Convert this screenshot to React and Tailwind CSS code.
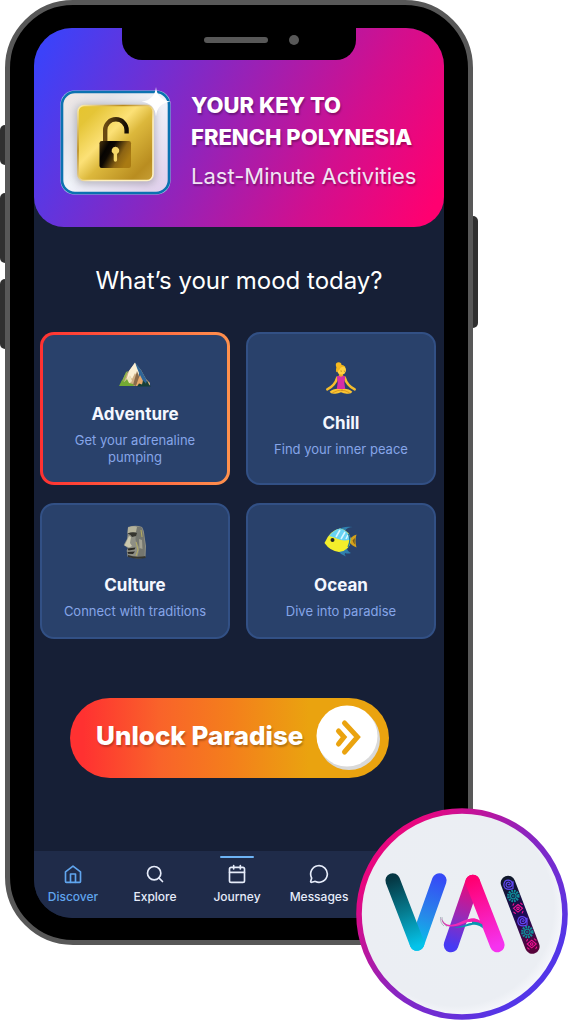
import React from "react";
import { Calendar, MessageCircle, Search } from "lucide-react";

function LockBadge() {
  return (
    <svg viewBox="0 0 111 105" className="mt-px h-[105px] w-[111px] shrink-0 overflow-visible" aria-hidden="true">
      <defs>
        <linearGradient id="silver" x1="0" y1="0" x2="1" y2="1">
          <stop offset="0" stopColor="#f1e8e4" />
          <stop offset="0.25" stopColor="#e3e4ea" />
          <stop offset="0.5" stopColor="#f1f4fa" />
          <stop offset="1" stopColor="#e0cdec" />
        </linearGradient>
        <linearGradient id="gold" x1="0" y1="0" x2="1" y2="1">
          <stop offset="0" stopColor="#e6c52f" />
          <stop offset="0.15" stopColor="#e5c537" />
          <stop offset="0.4" stopColor="#fce176" />
          <stop offset="0.55" stopColor="#dcb83c" />
          <stop offset="0.85" stopColor="#b98d20" />
          <stop offset="1" stopColor="#c79f36" />
        </linearGradient>
        <linearGradient id="goldEdge" x1="0" y1="0" x2="1" y2="1">
          <stop offset="0" stopColor="#fff1b0" />
          <stop offset="0.3" stopColor="#b98a1c" />
          <stop offset="0.6" stopColor="#fff0bd" />
          <stop offset="1" stopColor="#fff3c4" />
        </linearGradient>
        <linearGradient id="bronze" x1="0" y1="0" x2="1" y2="0.5">
          <stop offset="0" stopColor="#4a330b" />
          <stop offset="0.28" stopColor="#060402" />
          <stop offset="0.42" stopColor="#0d0803" />
          <stop offset="0.75" stopColor="#8d6413" />
          <stop offset="1" stopColor="#a97a12" />
        </linearGradient>
        <linearGradient id="shackle" x1="0" y1="0" x2="1" y2="0">
          <stop offset="0" stopColor="#6a4a12" />
          <stop offset="0.4" stopColor="#4a330e" />
          <stop offset="1" stopColor="#120b03" />
        </linearGradient>
        <filter id="soft" x="-20%" y="-20%" width="140%" height="140%">
          <feGaussianBlur stdDeviation="4" />
        </filter>
      </defs>
      <rect x="0.5" y="0.5" width="110" height="104" rx="14" fill="#b9cfe8" />
      <rect x="2" y="2" width="107" height="101" rx="13" fill="url(#silver)" stroke="#0b72b0" strokeWidth="2.6" />
      <rect x="16" y="15" width="79" height="79" rx="7" fill="#77747f" opacity="0.5" filter="url(#soft)" />
      <rect x="18" y="15.500" width="75" height="75" rx="6" fill="url(#gold)" stroke="url(#goldEdge)" strokeWidth="1.6" />
      <path d="M45.200 53V40a10.700 10.700 0 0 1 21.400 0v3.500" fill="none" stroke="url(#shackle)" strokeWidth="4.400" />
      <rect x="39.500" y="51" width="31.500" height="27" rx="2.200" fill="url(#bronze)" />
      <path d="M55.300 56.800a3.700 3.700 0 0 0-2 6.800l.4.400v6a1.700 1.700 0 0 0 3.400 0v-6l.4-.4a3.700 3.700 0 0 0-2.200-6.800z" fill="#f6d768" />
      <path d="M96-3q1.200 13 14.500 14.700Q97.200 13 96 26.500 94.800 13 81.500 11.700 94.800 10 96-3z" fill="#fff" />
    </svg>
  );
}

function MountainIcon() {
  return (
    <svg viewBox="0 -5 36 36" className="h-9 w-9" aria-hidden="true">
      <path d="M3 29 8 18l3-3 7-9 6 7 5 9 4 4v3z" fill="#cfae82" />
      <path d="M18 5.500 24 13l5 9 2 5-6-2-4-8z" fill="#2e6598" />
      <path d="M18 5.500 12 14l-3 10 4-5 2 3 3-6 3 5 1-5-2-5z" fill="#fbefd4" />
      <path d="M20 14l3 8-4 7-3-1 2-7z" fill="#8a6a4a" />
      <path d="M23 18l4 8-8 3 2-6z" fill="#e6a96b" />
      <path d="M13 18l2 6-5 5-4-3z" fill="#eee2bb" />
      <path d="M9 15l2-1-4 11-3 1z" fill="#8fb24c" />
      <path d="M2 29l3-6 2 2 3-3 2 4 4 1 1 2z" fill="#74aa33" />
      <path d="M20 29.500l2-3 3 1 1-4 3 3 1-3 2 4 2 2z" fill="#173f38" />
    </svg>
  );
}

function YogaIcon() {
  return (
    <svg viewBox="-1 -1 38 38" className="h-9 w-9" aria-hidden="true">
      <path d="M14 16.500q-2 8-10.500 12.500M22 16.500q2 8 10.500 12.500" fill="none" stroke="#f5bd2c" strokeWidth="2.600" strokeLinecap="round" />
      <path d="M6 31.500q4-4 12-3 8-1 12 3-1 2.500-6 2-3 0-6-1.500-3 1.500-6 1.500-5 .5-6-2z" fill="#fbc531" />
      <path d="M9 32.500q6-3 11-3M27 32.500q-5-3-9-2.500" fill="none" stroke="#cf8a1c" strokeWidth="0.800" />
      <path d="M16 12h4l.5 4h-5z" fill="#eaa927" />
      <path d="M13.500 15.500q1.500-.8 2.500-.8 2 2 4 0 1 0 2.500.8L21.500 22l1 6.500h-9l1-6.500z" fill="#d62ea6" />
      <circle cx="18.500" cy="8.500" r="4.800" fill="#ffd23f" />
      <path d="M13 11q-1-6 2-7.500 5-2 8 2-3-1-5.500.5-1 3-4.500 5z" fill="#f2b51d" />
      <circle cx="15.500" cy="3.200" r="3" fill="#f6b91f" />
      <path d="M17.500 9.500q.8.600 1.500 0M21 9.500q.6.600 1.200 0" stroke="#8b5a12" strokeWidth="0.700" fill="none" />
    </svg>
  );
}

function MoaiIcon() {
  return (
    <svg viewBox="0 -1 36 36" className="h-9 w-9" aria-hidden="true">
      <path d="M11 3q8-2.500 14 0 2 3 2.500 9L29 22l-.5 11q-6 3-18-.5l-.8-6 1-2.500-4-3 3.300-6 .5-4z" fill="#8e8f85" />
      <path d="M19 3q5-1 6 1l2 9 1 9-.5 10q-3 1.500-7 1l2-9-4-8z" fill="#74766f" />
      <path d="M11 3.500q6-2 9-.5l-1 5q-5 0-8.500 1.500z" fill="#b4b29b" />
      <path d="M10.500 9.500q5-2 9.500-.5l-1 3-4 1-1.500-2z" fill="#35352f" />
      <path d="M12 12l2 1-1 6 2 3-3 1.500-4.500-2z" fill="#cbc8ae" />
      <path d="M10.500 24.500l8-1-1 2-6 1zM10.500 28l7.500-.5-2 2.500-5-.2z" fill="#2b2a25" />
      <path d="M22 15l3 1 .5 9-3-1z" fill="#a3a293" />
      <path d="M19 18l2 8-2 6M24 6l1 7" stroke="#b9b15f" strokeWidth="0.900" fill="none" />
      <path d="M11 31q8 3 17.500 1v2q-9 2-17.500-1z" fill="#36362f" />
    </svg>
  );
}

function FishIcon() {
  return (
    <svg viewBox="0 -1 36 36" className="h-9 w-9" aria-hidden="true">
      <path d="M13 7q7-5.500 17-4-6 0-8 4zM15 27q3 4 8 5.500-2-2-1-3.500 3 1 6 0-4-2-4-5z" fill="#2f7fae" />
      <path d="M26 17q1-4 7.500-6.500-2 6.500 0 13-5.500-2-7.500-6.500z" fill="#d5a11b" />
      <path d="M29.500 16.500q1-1.500 2.500-2.500-.6 4 0 6.500-1.500-1-2.500-4z" fill="#7b5d17" />
      <path d="M1.500 19Q7 6 17 4.500q10 2 11 12-1 10-12 11.500-9-1-14.500-9z" fill="#f3ee2b" />
      <path d="M6 12Q11 5.500 17 4.500q9 2 10.800 11-8 2-13-.5-4-2-8.800-3z" fill="#67d2f3" />
      <path d="M17 6l-4 7M22 8l-4 7M25 11l-2 4" stroke="#d8f7ff" strokeWidth="1.600" />
      <path d="M25.500 10q3 6-.5 13" fill="none" stroke="#23759b" strokeWidth="1.300" />
      <circle cx="9.500" cy="16" r="2" fill="#1e2528" />
    </svg>
  );
}

function HomeIcon() {
  return (
    <svg viewBox="0 0 24 24" className="h-5 w-5" fill="none" stroke="currentColor" strokeWidth="2" strokeLinecap="round" strokeLinejoin="round" aria-hidden="true">
      <path d="M3 9.500 12 2.500l9 7V21a1 1 0 0 1-1 1H4a1 1 0 0 1-1-1z" />
      <path d="M9 22V12h6v10" />
    </svg>
  );
}

const moods = [
  { title: "Adventure", text: "Get your adrenaline pumping", Icon: MountainIcon, selected: true },
  { title: "Chill", text: "Find your inner peace", Icon: YogaIcon },
  { title: "Culture", text: "Connect with traditions", Icon: MoaiIcon },
  { title: "Ocean", text: "Dive into paradise", Icon: FishIcon },
];

function MoodCard({ title, text, Icon, selected }) {
  const frame = selected
    ? "border-[3px] border-transparent px-[15px] pt-[17px] pb-4 [background:linear-gradient(#29416b,#29416b)_padding-box,linear-gradient(90deg,#ff3131,#ff914d)_border-box]"
    : "border-2 border-[#325085] bg-[#29416b] px-4 pt-[18px] pb-[17px]";
  return (
    <button type="button" aria-pressed={!!selected} className={`flex flex-col items-center justify-center rounded-[14px] text-center ${frame}`}>
      <Icon />
      <span className="mt-[14px] text-[17px] leading-6 font-bold text-[#f4f7ff]">{title}</span>
      <span className="mt-[6px] text-[13px] leading-[17px] text-[#86a5e8]">{text}</span>
    </button>
  );
}

function NavItem({ label, active, marked, children }) {
  return (
    <a href="#" className={`relative flex flex-col items-center pt-[13px] pr-1 ${active ? "text-[#60a5ee]" : "text-[#e6ecfa]"}`}>
      {marked && <span className="absolute top-[5px] h-[2px] w-[34px] rounded-full bg-[#6db3f5]" />}
      {children}
      <span className="mt-[5px] text-xs leading-4 font-medium">{label}</span>
    </a>
  );
}

function Spiral({ x, y }) {
  return (
    <g transform={`translate(${x} ${y})`} fill="none" stroke="#6146f5" strokeWidth="1.200" strokeLinecap="round">
      <path d="M-.5.500q1.500 1 2-.8-.8-2.200-3-1.200-2 2-.5 4 2.500 1.700 4.800-.5 1.500-3-.5-5-3.300-2-6 .3-2.300 3.500 0 6.700 3.500 2.500 8 .5v-7" />
    </g>
  );
}

function Flower({ x, y }) {
  return (
    <g transform={`translate(${x} ${y})`} fill="none" stroke="#0f8e99">
      <circle r="5" strokeWidth="2.600" strokeDasharray="1.700 0.918" />
      <circle r="2.800" strokeWidth="1.300" />
      <circle r="0.900" strokeWidth="0.900" />
    </g>
  );
}

function Diamond({ x, y }) {
  return (
    <g transform={`translate(${x} ${y})`} fill="none" stroke="#f01293" strokeWidth="1.100" strokeLinecap="round">
      <path d="M0-3.800 4.500 0 0 3.800-4.500 0z" />
      <circle r="1.200" />
      <path d="M-5-3l.8-1.600M5 3l-.8 1.600M2.600-5.200l1.600 1.400M-2.600 5.200l-1.600-1.400" />
    </g>
  );
}

function VaiLogo() {
  return (
    <svg viewBox="0 0 212 212" className="h-full w-full" role="img" aria-label="VAI">
      <defs>
        <linearGradient id="ring" x1="0.150" y1="0.200" x2="0.850" y2="0.800">
          <stop offset="0" stopColor="#e8077f" />
          <stop offset="0.500" stopColor="#8a25c0" />
          <stop offset="1" stopColor="#5336e8" />
        </linearGradient>
        <radialGradient id="face" cx="0.470" cy="0.470" r="0.540">
          <stop offset="0" stopColor="#ebeff3" />
          <stop offset="0.880" stopColor="#ebeef3" />
          <stop offset="1" stopColor="#f8f9fd" />
        </radialGradient>
        <linearGradient id="v1" gradientUnits="userSpaceOnUse" x1="37" y1="70" x2="61" y2="138">
          <stop offset="0" stopColor="#053743" />
          <stop offset="0.500" stopColor="#067c90" />
          <stop offset="1" stopColor="#04c3ea" />
        </linearGradient>
        <linearGradient id="v2" gradientUnits="userSpaceOnUse" x1="84" y1="70" x2="61" y2="138">
          <stop offset="0" stopColor="#364bf6" />
          <stop offset="0.550" stopColor="#2788e9" />
          <stop offset="1" stopColor="#04c3ea" />
        </linearGradient>
        <linearGradient id="a1" gradientUnits="userSpaceOnUse" x1="116" y1="74" x2="95" y2="138">
          <stop offset="0" stopColor="#ee0878" />
          <stop offset="0.550" stopColor="#962bb8" />
          <stop offset="1" stopColor="#463af3" />
        </linearGradient>
        <linearGradient id="a2" gradientUnits="userSpaceOnUse" x1="117" y1="72" x2="141" y2="138">
          <stop offset="0" stopColor="#ff0073" />
          <stop offset="1" stopColor="#f533ef" />
        </linearGradient>
        <linearGradient id="i1" gradientUnits="userSpaceOnUse" x1="152" y1="72" x2="176" y2="141">
          <stop offset="0" stopColor="#10182c" />
          <stop offset="0.500" stopColor="#1c0c55" />
          <stop offset="1" stopColor="#57043b" />
        </linearGradient>
      </defs>
      <circle cx="106" cy="106" r="103" fill="url(#face)" stroke="url(#ring)" strokeWidth="5.600" />
      <g strokeWidth="14.600" strokeLinecap="round">
        <line x1="83.300" y1="72.500" x2="61" y2="135.500" stroke="url(#v2)" />
        <line x1="36.700" y1="72.500" x2="61" y2="135.500" stroke="url(#v1)" />
        <line x1="116.700" y1="74" x2="95" y2="137" stroke="url(#a1)" />
      </g>
      <path d="M88 116q5 4 12 3.300c8-1 12-5 18-4.500 4 0 6 2 8 5-4-3-7-3.500-11-2.500-8 2-18 5-27-1.300z" fill="#0796b0" />
      <path d="M85 110q2 9 10 8.500c9 0 15-5 22-5.500 6 0 7 3 9.500 6-2-7-6-9-11-8.500-8 1-14 6-21 6.500-5 0-7-3-9.500-7z" fill="#f02ab6" />
      <path d="M84.500 109q-.5 6 3.500 9M86 109q0 6 5 9.500" fill="none" stroke="#7c8694" strokeWidth="0.500" />
      <g strokeWidth="14.600" strokeLinecap="round">
        <line x1="116.700" y1="74" x2="141.300" y2="137" stroke="url(#a2)" />
        <line x1="152" y1="75" x2="176.300" y2="138.500" stroke="url(#i1)" />
      </g>
      <path d="M116 115.500q6-.5 11 5l-1-5.500q-4-3-10-2z" fill="#0796b0" />
      <path d="M112 111.500q8-3 14 2.500l1.500 3q-6-4.500-15-3z" fill="#f51fb0" />
      <Spiral x={152.700} y={76} />
      <Flower x={157.300} y={88} />
      <Diamond x={162} y={100.300} />
      <Spiral x={166.700} y={112.500} />
      <Flower x={171.300} y={124} />
      <Diamond x={175.700} y={136} />
    </svg>
  );
}

function Phone() {
  return (
    <div className="relative rounded-[68px] border-[5px] border-[#585858] bg-black px-6 pt-[23px] pb-[22px]">
      <span className="absolute top-[120px] -left-[10px] h-10 w-[5px] rounded-l-md bg-[#303030]" />
      <span className="absolute top-[188px] -left-[10px] h-[70px] w-[5px] rounded-l-md bg-[#303030]" />
      <span className="absolute top-[274px] -left-[10px] h-[70px] w-[5px] rounded-l-md bg-[#303030]" />
      <span className="absolute top-[211px] -right-[10px] h-[112px] w-[5px] rounded-r-md bg-[#303030]" />

      <div className="absolute top-[22px] left-1/2 flex h-[33px] w-[234px] -translate-x-1/2 items-start justify-end gap-[21px] rounded-b-[20px] bg-black pt-[8px] pr-[57px]">
        <span className="mt-[2px] h-[6px] w-16 rounded-full bg-[#585858]" />
        <span className="h-[10px] w-[10px] rounded-full bg-[#585858]" />
      </div>

      <div className="overflow-hidden rounded-[38px] bg-[#161f36]">
        <header className="flex items-start gap-5 rounded-[30px] bg-[linear-gradient(117deg,#3c42f9_4%,#8a26c0_40%,#d20f8e_72%,#ff0070_96%)] px-[26px] pt-[61px] pb-8">
          <LockBadge />
          <div className="whitespace-nowrap [text-shadow:1px_2px_2px_rgba(0,0,0,0.3)]">
            <h1 className="text-[22px] leading-8 font-extrabold text-white">
              YOUR KEY TO
              <br />
              FRENCH POLYNESIA
            </h1>
            <p className="mt-2 text-[22px] leading-[30px] text-[#f0e4f4]">Last-Minute Activities</p>
          </div>
        </header>

        <main>
          <h2 className="mt-[38px] text-center text-2xl leading-8 font-normal text-white">What’s your mood today?</h2>
          <div className="mt-[35px] grid grid-cols-2 gap-x-4 gap-y-[18px] pr-2 pl-[6px]">
            {moods.map((mood) => (
              <MoodCard key={mood.title} {...mood} />
            ))}
          </div>
          <div className="mt-[59px] mb-[73px] pr-[55px] pl-9">
            <button type="button" className="flex h-20 w-full items-center justify-between rounded-full bg-[linear-gradient(90deg,#ff3131_4%,#f9632a_28%,#f47e1c_50%,#eaa30f_75%)] pr-[9px] pl-[26px]">
              <span className="whitespace-nowrap pb-1 text-[26px] leading-9 font-extrabold text-white [text-shadow:1px_2px_2px_rgba(0,0,0,0.25)]">Unlock Paradise</span>
              <svg viewBox="0 0 64 66" className="h-[66px] w-16 shrink-0" aria-hidden="true">
                <circle cx="33" cy="34" r="31" fill="#d9d9d9" />
                <circle cx="31" cy="31" r="30.500" fill="#fff" />
                <path d="M28.500 18 41.500 32 28.500 47M22.500 26l5.500 6-5.500 7" fill="none" stroke="#eaa30f" strokeWidth="5" strokeLinecap="round" strokeLinejoin="miter" />
              </svg>
            </button>
          </div>
        </main>

        <nav className="grid h-[67px] grid-cols-5 bg-[#1f2b49]">
          <NavItem label="Discover" active>
            <HomeIcon />
          </NavItem>
          <NavItem label="Explore">
            <Search className="h-5 w-5" />
          </NavItem>
          <NavItem label="Journey" marked>
            <Calendar className="h-5 w-5" />
          </NavItem>
          <NavItem label="Messages">
            <MessageCircle className="h-5 w-5" />
          </NavItem>
        </nav>
      </div>
    </div>
  );
}

export default function App() {
  return (
    <div className="bg-white font-['Inter','Liberation_Sans',sans-serif]">
      <div className="relative mx-auto max-w-[570px] pr-[97px] pb-[75px] pl-[5px]">
        <Phone />
        <div className="absolute right-[2px] bottom-0 h-[212px] w-[212px]">
          <VaiLogo />
        </div>
      </div>
    </div>
  );
}
